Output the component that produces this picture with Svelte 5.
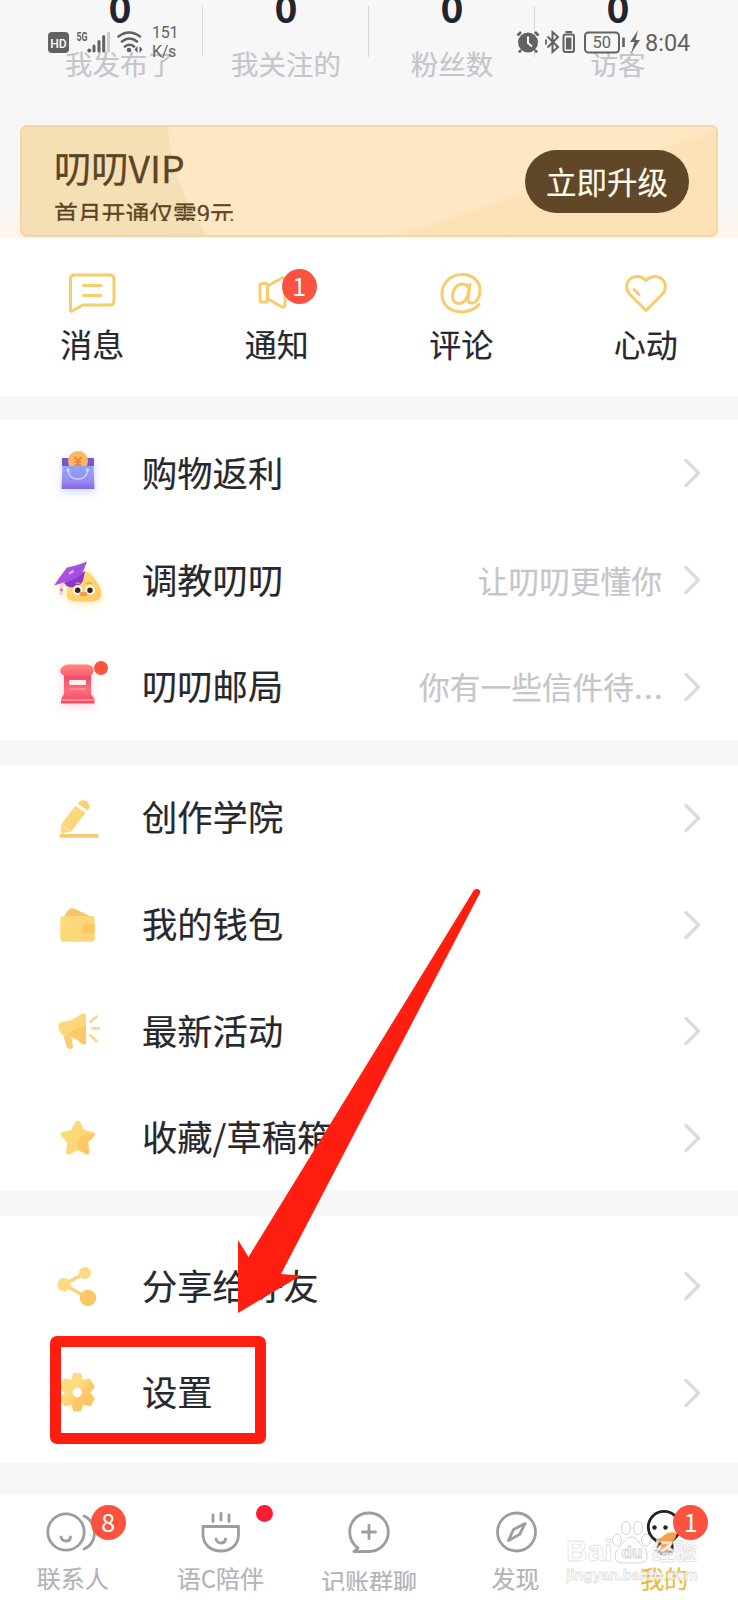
<script>
	const stats = [
		{ value: 0, label: '我发布了' },
		{ value: 0, label: '我关注的' },
		{ value: 0, label: '粉丝数' },
		{ value: 0, label: '访客' }
	];

	const shortcuts = [
		{ icon: 'message', label: '消息' },
		{ icon: 'notice', label: '通知', badge: 1 },
		{ icon: 'comment', label: '评论' },
		{ icon: 'heart', label: '心动' }
	];

	const groups = [
		[
			{ icon: 'bag', label: '购物返利' },
			{ icon: 'chick', label: '调教叨叨', note: '让叨叨更懂你' },
			{ icon: 'post', label: '叨叨邮局', note: '你有一些信件待', more: true, dot: true }
		],
		[
			{ icon: 'pencil', label: '创作学院' },
			{ icon: 'wallet', label: '我的钱包' },
			{ icon: 'horn', label: '最新活动' },
			{ icon: 'star', label: '收藏/草稿箱' }
		],
		[
			{ icon: 'share', label: '分享给好友' },
			{ icon: 'gear', label: '设置' }
		]
	];

	const tabs = [
		{ icon: 'contacts', label: '联系人', badge: 8 },
		{ icon: 'bowl', label: '语C陪伴', dot: true },
		{ icon: 'chat', label: '记账群聊', low: true },
		{ icon: 'compass', label: '发现' },
		{ icon: 'duck', label: '我的', badge: 1, active: true }
	];
</script>

{#snippet shortcutIcon(name)}
	<svg class="line" width="48" height="48" viewBox="0 0 48 48">
		{#if name === 'message'}
			<path d="M10 5H42Q46 5 46 9V31Q46 35 42 35H15L4 41Q2.500 42 2.500 40V9Q2.500 5 6.500 5H10" />
			<path d="M15.500 15.500H33M15.500 25.500H33" />
		{:else if name === 'notice'}
			<rect x="7" y="13.500" width="7.500" height="18.500" rx="2" />
			<path d="M14.500 16 28 8.500Q32 6.500 32 10.500V34Q32 38.500 28 36.500L14.500 28.500" />
		{:else if name === 'comment'}
			<path d="M42 34.500Q36 41.500 25 42C12.500 42 5 34.500 5 24S13 4.500 25 4.500C36 4.500 43 11.500 43 20.500C43 28 39 33 34.500 33C31 33 30.500 31 31 28L33 14.500" />
			<path d="M32 19C31 15.500 29 14 25.500 14C19.500 14 15.500 20 15.500 26C15.500 31 18.500 33.500 22 33.500C27 33.500 30.500 29 31.500 22" />
		{:else}
			<path d="M24 40.500 8 24.500C3.500 20 3.500 13 8 9C13 5 19.500 6 24 10.500C28.500 6 35 5 40 9C44.500 13 44.500 20 40 24.500Z" />
			<path d="M12 19.500 17 24.500" />
		{/if}
	</svg>
{/snippet}

{#snippet rowIcon(name)}
	<svg class="row-icon" width="48" height="48" viewBox="0 0 48 48">
		{#if name === 'bag'}
			<g class="glow-blue">
				<path d="M8 9H40V17H8Z" fill="#7d55cd" />
				<circle cx="24" cy="12" r="10" fill="#fbb95f" />
				<path d="M20.500 8 24 12 27.500 8M24 12V20M20.500 13H27.500M20.500 16H27.500" stroke="#ee7a38" stroke-width="1.700" fill="none" />
				<path d="M8.500 17H39.500L40.500 40H7.500Z" fill="url(#bagFill)" />
				<path d="M14 21Q15 30 24 30T33.500 21" stroke="#b9d4ff" stroke-width="1.700" fill="none" />
				<circle cx="14" cy="21" r="1.700" fill="#c5deff" />
				<circle cx="33.500" cy="21" r="1.700" fill="#c5deff" />
			</g>
		{:else if name === 'chick'}
			<g class="glow-gold">
				<path d="M13 34C14 26 19 18 28 16C36 14.500 39 20 43 26C48 33 49 40 45 43.500C41 46.500 18 46.500 14.500 43.500C12 41 12.500 38 13 34Z" fill="url(#chickFill)" />
				<path d="M10 27Q12 30 15 31Q24 33 29 25L31 15Z" fill="#8f35cc" />
				<path d="M0 29.500Q7 19 13 11.500Q22 10 33 5.500Q31 12 27 19Q20 24.500 10 26.500Q5 28 0 29.500Z" fill="url(#hatFill)" />
				<path d="M14 17 19 13.500 20 16 16 18.500Z" fill="#eba0df" />
				<path d="M9 27 7 31V39" stroke="#f3cdd6" stroke-width="2.500" fill="none" />
				<circle cx="7.500" cy="34" r="1.500" fill="#d76cc5" />
				<circle cx="23.700" cy="34" r="5" fill="#fff6e8" />
				<circle cx="36" cy="34" r="5" fill="#fff6e8" />
				<circle cx="23.700" cy="34.300" r="2.700" fill="#28222a" />
				<circle cx="36" cy="34.300" r="2.700" fill="#28222a" />
				<path d="M21.500 27.500Q24 26 26 28M32.500 28Q35 26 38 27.500" stroke="#e3a045" stroke-width="1.300" fill="none" />
				<ellipse cx="29.500" cy="38" rx="4.200" ry="2.300" fill="#f79b4e" />
			</g>
		{:else if name === 'post'}
			<g class="glow-red">
				<path d="M10 12H37V31L40.500 36V40.500H7V36L10 31Z" fill="url(#postFill)" />
				<path d="M6.500 6Q10 1 16 1.500H34Q40 3 39.500 8Q39 13 33 13H14Q5 13 6.500 6Z" fill="url(#postTop)" />
				<rect x="15" y="17" width="17" height="5" rx="1" fill="#fff0ed" />
				<path d="M16 26H31M7 37H40.500" stroke="#ff9ca2" stroke-width="1.600" />
			</g>
		{:else if name === 'pencil'}
			<path class="pencil" d="M8 38.500V31L21.500 13 30.500 19 16.500 36.500Z" fill="url(#gold)" stroke="url(#gold)" />
			<path d="M23.500 9.500Q28 4 33 7.500Q37.500 11.500 34 16.800Z" fill="#fad07a" />
			<path d="M8 31 16 37.500" stroke="#fff0bb" stroke-width="1" />
			<path d="M7 41.800H43" stroke="#f8c878" stroke-width="3.800" stroke-linecap="round" />
		{:else if name === 'wallet'}
			<path d="M10 16Q14 7 18 7Q20 7 36 15V20H10Z" fill="#fac568" />
			<rect x="6.300" y="15" width="34.400" height="25.800" rx="3" fill="url(#gold)" />
			<path d="M40.700 23H32Q28 23.500 28 27.500T32 32.500H40.700Z" fill="#fcc765" />
		{:else if name === 'horn'}
			<path d="M9 25H16L18.500 40Q16 43.500 13 40Z" fill="#fbcb78" stroke="#fbcb78" stroke-linejoin="round" />
			<path d="M4.500 19Q5 15 9 14.500Q19 14 27 7Q32 5 32 9V36Q31 39 27 36Q21 30 12 29Q4 27 4.500 19Z" fill="url(#gold)" />
			<path d="M14 29Q16 22 32 19V36Q31 39 27 36Q21 30 14 29Z" fill="#fac25c" opacity=".65" />
			<path d="M36.500 15 42.500 9.500M38.500 21.300H45M36.500 28.500 42.500 34" stroke="#fbd88c" stroke-width="2.800" stroke-linecap="round" />
		{:else if name === 'star'}
			<path class="round" d="M23.700 9 28.600 18.300 38.500 20.500 31.700 27.500 33 38 23.700 33.400 14.500 38 15.700 27.500 9 20.500 18.800 18.300Z" fill="url(#gold)" stroke="url(#gold)" />
			<path d="M23.700 34.500Q22 24 31 20.500Q36 19 40 20.500Q41 21.500 33.500 28L35 38Q34 41 31 39.500Z" fill="#fcc35c" opacity=".7" />
		{:else if name === 'share'}
			<path d="M31 11 10 22.500 34 36" stroke="#fbd282" stroke-width="3.600" fill="none" />
			<circle cx="31" cy="11" r="6" fill="#fddb82" />
			<circle cx="10" cy="22.800" r="6.700" fill="#fddb82" />
			<circle cx="34" cy="36" r="8.300" fill="#fdc968" />
		{:else}
			<path fill="url(#gearFill)" d="M17.500 11 19 5Q19.200 4 20.500 4H26Q27.200 4 27.500 5L29 11 34.500 9.500Q36 9.500 36.500 10.500L40.500 17Q41.500 18.500 40 19.500L36 23.500 40 28Q41.500 29 40.500 30.500L37 36.500Q36 37.500 34.500 37L29 35.500 27.500 41.500Q27.200 42.500 26 42.500H20.500Q19.200 42.500 19 41.500L17.500 35.500 12 37Q10.500 37.500 9.500 36.500L6 30.500Q5 29 6.500 28L10.500 23.500 6.500 19.500Q5 18.500 6 17L9.500 10.500Q10.500 9.500 12 9.500Z" />
			<circle cx="23.300" cy="23.500" r="4.700" fill="#fff" />
		{/if}
	</svg>
{/snippet}

{#snippet tabIcon(name)}
	<svg class="tab-icon" width="60" height="52" viewBox="0 0 60 52">
		{#if name === 'contacts'}
			<circle cx="22" cy="27" r="18.200" />
			<path d="M17 32Q18 36 22 36T26.500 32M40 11C54 17 54 39 40 44" />
		{:else if name === 'bowl'}
			<path d="M12 21.500H47.500V29C47.500 40 40 46 30 46S12 40 12 29ZM25 34Q26 38 30 38T34.500 34M22 10V16.500M30 8.500V15M38 10V16.500" />
		{:else if name === 'chat'}
			<path d="M15 46.500H30C41 46.500 49.300 37.500 49.300 27S41 8 30 8 10.700 16 10.700 27Q10.700 37 19 43L15 46.500" />
			<path d="M23.500 27H36.500M30 20.500V33.500" />
		{:else if name === 'compass'}
			<circle cx="29.500" cy="27" r="19" />
			<path d="M38 18.500 32.500 29.500 21.500 35.500 26.500 24.500Z" />
		{:else}
			<g class="duck">
				<path d="M22 36 25 40 22.500 45.500Q24 49 31 49T38.500 45L38 38Z" fill="#f3a45b" stroke="#242424" stroke-width="2.500" />
				<circle cx="30" cy="22" r="15.700" fill="#fff" stroke="#202124" stroke-width="2.800" />
				<circle cx="20.500" cy="22.500" r="2.200" fill="#222" />
				<circle cx="31.500" cy="22.500" r="2.200" fill="#222" />
				<path d="M27 33Q34 25 43 28Q41 39 31 39Q24 38 22 34Z" fill="#f5a14a" />
			</g>
		{/if}
	</svg>
{/snippet}

<svg class="defs" width="0" height="0" aria-hidden="true">
	<defs>
		<linearGradient id="gold" x1="0" y1="0" x2="1" y2="1"><stop stop-color="#fddb7c" /><stop offset="1" stop-color="#fbd479" /></linearGradient>
		<linearGradient id="gearFill" x1="0" y1="0" x2="1" y2="1"><stop offset=".45" stop-color="#fddb7e" /><stop offset=".6" stop-color="#fdc766" /></linearGradient>
		<linearGradient id="bagFill" x1="0" y1="0" x2="0" y2="1"><stop stop-color="#8ea6fb" /><stop offset=".7" stop-color="#9c86ee" /><stop offset="1" stop-color="#8468e0" /></linearGradient>
		<linearGradient id="hatFill"><stop stop-color="#b64de5" /><stop offset="1" stop-color="#9059da" /></linearGradient>
		<linearGradient id="chickFill" x1="0" y1="0" x2="1" y2="1"><stop stop-color="#ffe07a" /><stop offset="1" stop-color="#ffc765" /></linearGradient>
		<linearGradient id="postTop" x1="0" y1="0" x2="0" y2="1"><stop stop-color="#ff8a7c" /><stop offset="1" stop-color="#fb5a72" /></linearGradient>
		<linearGradient id="postFill" x1="0" y1="0" x2="0" y2="1"><stop stop-color="#ed4870" /><stop offset=".5" stop-color="#ff6c7a" /><stop offset="1" stop-color="#ef4c68" /></linearGradient>
	</defs>
</svg>

<div class="screen">
	<header>
		<div class="stats">
			{#each stats as { value, label }}
				<div class="stat">
					<b>{value}</b>
					<span>{label}</span>
				</div>
			{/each}
		</div>

		<section class="vip">
			<div class="vip-text">
				<h2>叨叨VIP</h2>
				<p>首月开通仅需9元</p>
			</div>
			<button class="upgrade">立即升级</button>
		</section>
	</header>

	<nav class="shortcuts">
		{#each shortcuts as { icon, label, badge }}
			<div class="shortcut">
				<div class="icon-box">
					{@render shortcutIcon(icon)}
					{#if badge}<i class="badge">{badge}</i>{/if}
				</div>
				<span>{label}</span>
			</div>
		{/each}
	</nav>

	{#each groups as rows, i}
		<section class="group" class:last={i === groups.length - 1}>
			{#each rows as { icon, label, note, more, dot }}
				<div class="row">
					<div class="icon-box">
						{@render rowIcon(icon)}
						{#if dot}<i class="dot"></i>{/if}
					</div>
					<span class="label">{label}</span>
					{#if note}
						<span class="note">{note}{#if more}<span class="more">...</span>{/if}</span>
					{/if}
					<svg class="chevron" width="18" height="32" viewBox="0 0 18 32"><path d="M2 3.500 14.500 16 2 28.500" /></svg>
				</div>
			{/each}
		</section>
	{/each}

	<footer>
		{#each tabs as { icon, label, badge, dot, low, active }}
			<div class="tab" class:active class:low>
				<div class="icon-box">
					{@render tabIcon(icon)}
					{#if badge}<i class="badge {icon}">{badge}</i>{/if}
					{#if dot}<i class="dot"></i>{/if}
				</div>
				<span>{label}</span>
			</div>
		{/each}
	</footer>

	<div class="status">
		<svg width="96" height="26" viewBox="0 0 96 26">
			<rect x="0" y="4" width="21" height="21" rx="4" fill="#626262" />
			<text x="2.200" y="19.500" font-size="13.500" font-weight="500" fill="#fff" textLength="16.500" lengthAdjust="spacingAndGlyphs">HD</text>
			<text x="28.500" y="12.700" font-size="12.500" font-weight="700" fill="#626262" textLength="11" lengthAdjust="spacingAndGlyphs">5G</text>
			<circle cx="41.300" cy="22.500" r="2" fill="#626262" />
			<path d="M46 23V18M51 23V13.500M55.700 23V8.500" stroke="#626262" stroke-width="3" stroke-linecap="round" />
			<path d="M60.500 23V5" stroke="#ccc" stroke-width="3" stroke-linecap="round" />
			<path d="M70.500 8.500Q81 .5 92 8.500M74 13.500Q81.500 7.500 89 13.500M77 18.500Q81.500 15 86 18.500" stroke="#626262" stroke-width="2.600" fill="none" stroke-linecap="round" />
			<circle cx="81" cy="22" r="2.300" fill="#626262" />
			<path d="M89.500 18V25L86.500 21.500ZM91.500 18 94.500 21.500 91.500 25Z" fill="#626262" />
		</svg>
		<span class="speed">151<br />K/s</span>
		<svg class="right" width="126" height="26" viewBox="0 0 126 26">
			<g fill="none" stroke="#626262">
				<circle cx="12" cy="14.500" r="10" fill="#626262" stroke="none" />
				<path d="M1.500 7.500 5 4M19 4 22.500 7.500M5 22 3 24.500M19 22 21 24.500" stroke-width="2.600" />
				<path d="M12 8.500V15L16 18.500" stroke="#f7f7f7" stroke-width="2" />
				<path d="M31.500 8.500 42 19 36.500 24V4L42 9 31.500 19.500" stroke-width="2" />
				<path d="M30 11.500V16.500" stroke-width="1.800" />
				<path d="M48.500 6.500H56Q58 6.500 58 8.500V22Q58 24 56 24H49.500Q47.500 24 47.500 22V8.500Q47.500 6.500 49.500 6.500M49.500 4H56" stroke-width="2" />
				<path d="M52.700 9.500V21.500" stroke-width="5.500" />
				<rect x="69" y="4.500" width="34" height="20" rx="3.500" stroke-width="2" />
				<path d="M107.500 9.500V19" stroke-width="2.600" />
				<path d="M122 2.500 114 14H118.500L115 25.500 124 12H119.500Z" fill="#626262" stroke="none" />
			</g>
			<text x="76.500" y="20" font-size="16.500" fill="#626262">50</text>
		</svg>
		<span class="time">8:04</span>
	</div>

	<div class="highlight"></div>
	<svg class="arrow" width="250" height="430" viewBox="0 0 250 430">
		<path d="M3 427V354L13.500 371 239 4Q244 1 245.500 6L46 388 66 389.500Z" fill="#ff1e10" />
	</svg>

	<div class="watermark">
		<div class="brand">
			<span class="bai">Bai</span>
			<svg width="40" height="46" viewBox="0 0 40 46">
				<ellipse cx="6" cy="21" rx="4.500" ry="6" />
				<ellipse cx="15" cy="9" rx="4.500" ry="6.500" />
				<ellipse cx="27" cy="9" rx="4.500" ry="6.500" />
				<ellipse cx="35" cy="21" rx="4.500" ry="6" />
				<path d="M20 18C27 18 29 27 35 31Q39 43 30 44H11Q1 43 5 32C11 28 13 18 20 18Z" />
				<text x="10.500" y="39" font-size="17">du</text>
			</svg>
			<span class="jy">经验</span>
		</div>
		<div class="url">jingyan.baidu.com</div>
	</div>
</div>

<style>
	:global(body) {
		background: #f7f7f7;
	}

	* {
		box-sizing: border-box;
	}

	.defs {
		position: absolute;
	}

	.screen {
		position: relative;
		display: flex;
		flex-direction: column;
		width: 738px;
		height: 1600px;
		overflow: hidden;
		background: #f7f7f7;
		color: #27282d;
		font-family: 'Noto Sans CJK SC', sans-serif;
	}

	header {
		height: 238px;
		background: linear-gradient(#f7f7f7 200px, #fff4e8 238px);
	}

	/* statistics, scrolled partly under the status bar */
	.stats {
		display: grid;
		grid-template-columns: repeat(4, 166px);
		height: 125px;
		padding-left: 37px;
	}
	.stat {
		position: relative;
		display: flex;
		flex-direction: column;
		align-items: center;
	}
	.stat b {
		height: 44px;
		margin-top: -23px;
		font-size: 39px;
		font-weight: 700;
		line-height: 59px;
		color: #23242e;
	}
	.stat span {
		margin: 22px 0 0;
		font-size: 27.5px;
		line-height: 40px;
		color: #c5c5cb;
		-webkit-text-stroke: 0.2px;
	}
	.stat + .stat::before {
		content: '';
		position: absolute;
		left: -1px;
		top: 6px;
		width: 1px;
		height: 51px;
		background: #d8d8db;
	}

	.vip {
		display: flex;
		justify-content: space-between;
		width: 698px;
		height: 112px;
		margin-left: 20px;
		padding: 25px 27px 0 33px;
		border: 2px solid #f4d5a4;
		border-radius: 7px;
		background:
			linear-gradient(162deg, transparent 68%, #fcdcae88 70%),
			radial-gradient(ellipse 380px 270px at 525px -10px, #fee7c2 99.500%, transparent 100%),
			linear-gradient(90deg, #f6dfb5, #f0dfb5);
		color: #5c4524;
	}
	h2 {
		height: 54px;
		margin: -12px 0 0 -1px;
		font-size: 37.3px;
		font-weight: 400;
		line-height: 54px;
		-webkit-text-stroke: 0.3px;
	}
	.vip-text p {
		height: 27px;
		margin: 0 0 0 -1px;
		overflow: hidden;
		font-size: 23.800px;
		line-height: 38px;
		-webkit-text-stroke: 0.3px;
	}
	.upgrade {
		width: 164px;
		height: 63px;
		margin-top: -2px;
		padding: 0 0 1px;
		border: 0;
		border-radius: 32px;
		background: #5f4728;
		color: #fffbe9;
		font: 30.500px 'Noto Sans CJK SC', sans-serif;
		-webkit-text-stroke: 0.2px;
	}

	.shortcuts {
		display: grid;
		grid-template-columns: repeat(4, 1fr);
		height: 158px;
		margin-bottom: 24px;
		padding-top: 32px;
		background: #fff;
	}
	.shortcut {
		display: flex;
		flex-direction: column;
		align-items: center;
	}
	.shortcut > span {
		margin-top: 1px;
		font-size: 32px;
		line-height: 48px;
		-webkit-text-stroke: 0.2px;
	}
	.icon-box {
		position: relative;
		display: flex;
	}
	.line {
		fill: none;
		stroke: #f8cb6c;
		stroke-width: 3;
		stroke-linecap: round;
		stroke-linejoin: round;
	}

	.badge {
		position: absolute;
		left: 29px;
		top: -1px;
		width: 35px;
		height: 35px;
		border-radius: 50%;
		background: #fb5340;
		color: #fff;
		font-size: 25px;
		font-style: normal;
		line-height: 33px;
		text-align: center;
	}
	.dot {
		position: absolute;
		left: 40px;
		top: -2px;
		width: 14px;
		height: 14px;
		border-radius: 50%;
		background: #fb5340;
	}

	.group {
		margin-bottom: 24.500px;
		background: #fff;
	}
	.group.last {
		margin-bottom: 32px;
		padding: 17px 0;
	}
	.row {
		display: flex;
		align-items: center;
		height: 106.700px;
		padding: 0 36px 0 54px;
		white-space: nowrap;
	}
	.row-icon {
		overflow: visible;
	}
	.glow-blue {
		filter: drop-shadow(0 3px 4px #8096ff66);
	}
	.glow-gold {
		filter: drop-shadow(0 3px 4px #ffcf5c66);
	}
	.glow-red {
		filter: drop-shadow(0 3px 4px #ff667744);
	}
	.round {
		stroke-width: 5;
		stroke-linejoin: round;
	}
	.pencil {
		stroke-width: 2;
		stroke-linejoin: round;
	}
	.label {
		margin: -3px auto 0 40px;
		font-size: 35.300px;
		line-height: 52px;
		-webkit-text-stroke: 0.2px;
	}
	.note {
		margin: -1px 22px 0 0;
		font-size: 30.700px;
		line-height: 46px;
		color: #c5c5cb;
		-webkit-text-stroke: 0.2px;
	}
	.more {
		margin-right: -2px;
		letter-spacing: 1.5px;
	}
	.chevron {
		fill: none;
		stroke: #dcdce0;
		stroke-width: 3.500;
		stroke-linecap: round;
		stroke-linejoin: round;
	}

	footer {
		display: grid;
		grid-template-columns: repeat(5, 1fr);
		flex: 1;
		padding-top: 10px;
		background: #fff;
		color: #b3b3b9;
	}
	.tab {
		display: flex;
		flex-direction: column;
		align-items: center;
	}
	.tab > span {
		height: 35px;
		overflow: hidden;
		margin-top: 3px;
		margin-left: -2px;
		font-size: 24px;
		line-height: 36px;
		-webkit-text-stroke: 0.2px;
	}
	.tab.low > span {
		height: 31px;
		margin-left: 0;
		line-height: 42px;
	}
	.tab.active > span {
		margin-left: 0;
		color: #efb72f;
	}
	.tab-icon {
		fill: none;
		stroke: #9c9ca3;
		stroke-width: 2.800;
		stroke-linecap: round;
		stroke-linejoin: round;
	}
	.duck {
		stroke: none;
	}
	.tab .badge {
		left: 47px;
		top: 0;
	}
	.tab .badge.duck {
		left: 39px;
	}
	.tab .dot {
		left: 65px;
		top: 0;
		width: 17px;
		height: 17px;
		background: #fb1d35;
	}

	/* system status bar */
	.status {
		position: absolute;
		left: 48px;
		top: 28px;
		display: flex;
		color: #626262;
		font-family: Roboto, sans-serif;
	}
	.speed {
		width: 30px;
		margin: -5px 0 0 8px;
		font-size: 16px;
		line-height: 19px;
		letter-spacing: -0.3px;
	}
	.right {
		margin-left: 334px;
	}
	.time {
		margin-left: 3px;
		font-size: 23.500px;
		line-height: 30px;
	}

	.highlight {
		position: absolute;
		left: 50px;
		top: 1336px;
		width: 216px;
		height: 108px;
		border: 11.500px solid #ff1e10;
		border-radius: 7px;
	}
	.arrow {
		position: absolute;
		left: 235px;
		top: 886px;
	}

	.watermark {
		position: absolute;
		left: 566px;
		top: 1519px;
		color: #ffffffd9;
		font-family: 'Liberation Sans', sans-serif;
		font-weight: 700;
		-webkit-text-stroke: 0.8px #cfcfcfaa;
	}
	.brand {
		display: flex;
		align-items: flex-end;
		height: 46px;
	}
	.brand svg {
		fill: #ffffffb3;
		stroke: #d5d5d5;
		stroke-width: 1;
	}
	.bai {
		font-size: 30px;
		line-height: 28px;
		width: 45px;
	}
	.jy {
		margin-left: 1px;
		font: 700 22.500px/30px 'Noto Sans CJK SC', sans-serif;
	}
	.url {
		font-size: 15px;
		line-height: 20px;
	}
</style>
